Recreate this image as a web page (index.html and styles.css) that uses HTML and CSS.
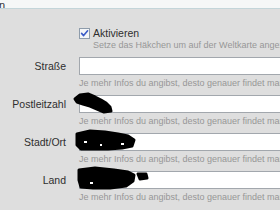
FILE: index.html
```html
<!DOCTYPE html>
<html lang="de">
<head>
<meta charset="utf-8">
<title>Profil</title>
<link rel="stylesheet" href="styles.css">
</head>
<body>
<div class="page">
  <div class="top"><span class="top-title">n</span></div>
  <div class="form">
    <div class="label"></div>
    <div class="cell">
      <label class="check">
        <svg class="box" width="11" height="11" viewBox="0 0 11 11">
          <rect x="0.5" y="0.5" width="10" height="10" fill="#f4f6f8" stroke="#8e9cab"/>
          <path d="M2.6 5.4 L4.6 7.6 L8.6 2.8" fill="none" stroke="#3a5bc7" stroke-width="1.6" stroke-linecap="round" stroke-linejoin="round"/>
        </svg>
        <span>Aktivieren</span>
      </label>
      <div class="hint indent">Setze das Häkchen um auf der Weltkarte angezeigt zu werden</div>
    </div>

    <div class="label">Straße</div>
    <div class="cell">
      <div class="input"></div>
      <div class="hint">Je mehr Infos du angibst, desto genauer findet man dich</div>
    </div>

    <div class="label">Postleitzahl</div>
    <div class="cell">
      <div class="input"></div>
      <div class="hint">Je mehr Infos du angibst, desto genauer findet man dich</div>
    </div>

    <div class="label">Stadt/Ort</div>
    <div class="cell">
      <div class="input"></div>
      <div class="hint">Je mehr Infos du angibst, desto genauer findet man dich</div>
    </div>

    <div class="label">Land</div>
    <div class="cell">
      <div class="input"></div>
      <div class="hint">Je mehr Infos du angibst, desto genauer findet man dich</div>
    </div>
  </div>

  <svg class="redact" width="280" height="210" viewBox="0 0 280 210">
    <g fill="#000" stroke="#000" stroke-width="3" stroke-linejoin="round">
      <path d="M75 99 L80 95 L88 94 L95 97 L101 100 L106 103 L110 107 L111 111 L104 112 L97 109 L90 106 L83 104 L77 102 Z"/>
      <path d="M77 134 L90 131 L105 132 L118 134 L128 136 L134 140 L132 146 L122 148 L108 149 L94 149 L81 149 L77 145 Z"/>
      <path d="M79 170 L95 168 L114 170 L128 172 L134 175 L133 181 L126 186 L110 188 L93 188 L81 187 L79 180 Z"/>
      <path d="M138 174 L146 174 L147 178 L140 179 Z"/>
    </g>
    <g fill="#fff">
      <rect x="84" y="141" width="3" height="2"/>
      <rect x="100" y="144" width="2" height="2"/>
      <rect x="121" y="143" width="3" height="2"/>
      <rect x="90" y="182" width="3" height="2"/>
    </g>
  </svg>
</div>
</body>
</html>
```

FILE: styles.css
```css
html, body {
  margin: 0;
  padding: 0;
}
body {
  width: 280px;
  height: 210px;
  overflow: hidden;
  background: #dedede;
  font-family: "Liberation Sans", Arial, sans-serif;
}
.page {
  position: relative;
  width: 280px;
  height: 210px;
  overflow: hidden;
}
.top {
  height: 8px;
  background: #f5f7f7;
  border-bottom: 1px solid #c3d5d9;
  overflow: hidden;
}
.top-title {
  display: block;
  margin-left: -1px;
  font-size: 11px;
  line-height: 10px;
  margin-top: 0;
  color: #333;
}
.form {
  display: grid;
  grid-template-columns: 66px 240px;
  column-gap: 13px;
  row-gap: 6px;
  padding-top: 18px;
}
.label {
  text-align: right;
  font-size: 10.5px;
  line-height: 18px;
  color: #2e2e2e;
  white-space: nowrap;
}
.cell {
  display: flex;
  flex-direction: column;
}
.check {
  display: flex;
  align-items: center;
  gap: 3px;
  height: 12px;
  font-size: 10.5px;
  color: #2e2e2e;
}
.box {
  flex: none;
}
.input {
  height: 16px;
  background: #fff;
  border: 1px solid #a2a7ad;
  width: 260px;
}
.hint {
  margin-top: 3px;
  font-size: 9px;
  line-height: 11px;
  color: #979797;
  white-space: nowrap;
}
.indent {
  margin-top: 1px;
  padding-left: 14px;
}
.redact {
  position: absolute;
  left: 0;
  top: 0;
  pointer-events: none;
}
```
